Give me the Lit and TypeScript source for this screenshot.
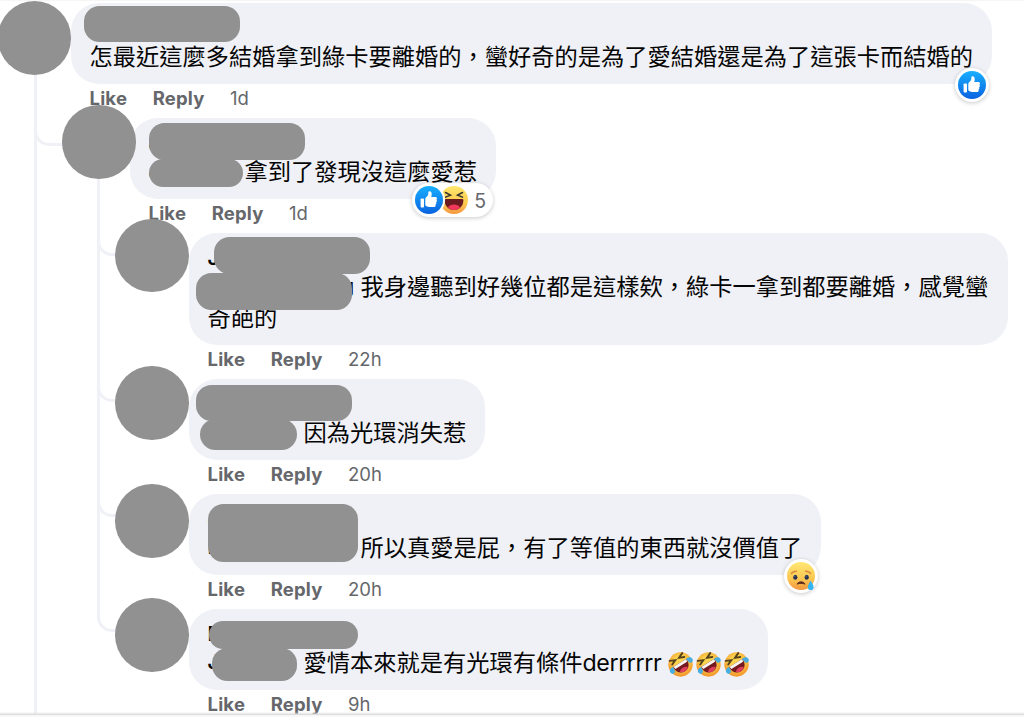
import { LitElement, html, css, nothing, TemplateResult } from 'lit';
import { customElement, property } from 'lit/decorators.js';
import { styleMap } from 'lit/directives/style-map.js';

type Reaction = 'like' | 'haha' | 'sad';

// x, y, width, height inside the bubble
type Mask = [number, number, number, number];

interface Comment {
  name: string;
  mention?: { text: string; width: number; end?: boolean };
  text: string;
  latin?: string;
  laughs?: number;
  time: string;
  avatar: [number, number];
  masks: Mask[];
  reactions?: Reaction[];
  count?: number;
  replies?: Comment[];
}

const thread: Comment = {
  name: '',
  text: '怎最近這麼多結婚拿到綠卡要離婚的，蠻好奇的是為了愛結婚還是為了這張卡而結婚的',
  time: '1d',
  avatar: [-2.4, -2],
  masks: [[13.3, 3, 156, 36]],
  reactions: ['like'],
  replies: [
    {
      name: 'J',
      mention: { text: 'J', width: 96 },
      text: '拿到了發現沒這麼愛惹',
      time: '1d',
      avatar: [3, -13.2],
      masks: [[19.4, 5.3, 156, 36.2], [19.4, 40.4, 94, 28]],
      reactions: ['like', 'haha'],
      count: 5,
      replies: [
        {
          name: 'J',
          mention: { text: 'g', width: 153, end: true },
          text: '我身邊聽到好幾位都是這樣欸，綠卡一拿到都要離婚，感覺蠻奇葩的',
          time: '22h',
          avatar: [-3, -14.5],
          masks: [[25, 4.2, 156, 36.5], [7, 40.3, 156, 36.5]],
        },
        {
          name: '',
          mention: { text: '', width: 96 },
          text: '因為光環消失惹',
          time: '20h',
          avatar: [-3, -13],
          masks: [[7, 6, 156, 36], [11, 40, 96.5, 31]],
        },
        {
          name: 'J',
          mention: { text: 'L', width: 153 },
          text: '所以真愛是屁，有了等值的東西就沒價值了',
          time: '20h',
          avatar: [-3, -9.8],
          masks: [[19.4, 9.9, 149.6, 58]],
          reactions: ['sad'],
        },
        {
          name: 'E',
          mention: { text: 'J', width: 96 },
          text: '愛情本來就是有光環有條件',
          latin: 'derrrrrr',
          laughs: 3,
          time: '9h',
          avatar: [-3, -11.2],
          masks: [[20, 11.4, 149.3, 28], [22.5, 38.5, 85.5, 33]],
        },
      ],
    },
  ],
};

const faces: Record<Reaction, TemplateResult> = {
  like: html`
    <svg viewBox="0 0 28 28">
      <defs>
        <linearGradient id="blue" x1="0" y1="0" x2="0" y2="1">
          <stop offset="0" stop-color="#18afff" />
          <stop offset="1" stop-color="#0a62df" />
        </linearGradient>
      </defs>
      <circle cx="14" cy="14" r="14" fill="url(#blue)" />
      <rect x="5.6" y="12.4" width="3.4" height="9" rx="0.9" fill="#fff" />
      <path
        d="M10.3 19.2v-6.1c0-.7.3-1.2.9-1.8l1.6-1.9c.4-.5.5-1.2.5-2.1 0-1.5.5-2 1.3-2 1.3 0 2.1 1.2 2.1 2.9 0 1-.2 1.8-.5 2.7h4c1.1 0 1.8.7 1.8 1.6 0 .6-.3 1-.7 1.3.4.3.6.7.6 1.2 0 .7-.4 1.2-.9 1.4.2.3.3.6.3 1 0 .7-.4 1.1-.9 1.3.1.2.2.5.2.7 0 1-.7 1.5-1.9 1.5h-4.4c-1.7 0-2.9-.4-4-1.7z"
        fill="#fff"
      />
    </svg>
  `,
  haha: html`
    <svg viewBox="0 0 28 28">
      <defs>
        <linearGradient id="yellow" x1="0" y1="0" x2="0" y2="1">
          <stop offset="0" stop-color="#ffe76c" />
          <stop offset="0.6" stop-color="#fccb50" />
          <stop offset="1" stop-color="#f69540" />
        </linearGradient>
      </defs>
      <circle cx="14" cy="14" r="14" fill="url(#yellow)" />
      <path d="M5.5 6.5l5 2.6-5 2M22.5 6.5l-5 2.6 5 2" fill="none" stroke="#33322e" stroke-width="1.5" stroke-linecap="round" />
      <path d="M4.6 14.2c0-1 .8-1.2 2-1.2h14.8c1.2 0 2 .2 2 1.2 0 5-3.4 9.8-9.4 9.8s-9.4-4.8-9.4-9.8z" fill="#6b1a20" />
      <path d="M8 21.2c1.3-1.7 3.4-2.6 6-2.6s4.7.9 6 2.6c-1.5 1.8-3.5 2.8-6 2.8s-4.5-1-6-2.8z" fill="#f2385a" />
    </svg>
  `,
  sad: html`
    <svg viewBox="0 0 28 28">
      <defs>
        <linearGradient id="pale" x1="0" y1="0" x2="0" y2="1">
          <stop offset="0" stop-color="#ffe874" />
          <stop offset="0.6" stop-color="#fcc751" />
          <stop offset="1" stop-color="#f3953f" />
        </linearGradient>
      </defs>
      <circle cx="14" cy="14" r="14" fill="url(#pale)" />
      <path d="M4.4 11.6c.9-1.5 2.6-2.4 5-2.4M23.6 11.6c-.9-1.5-2.6-2.4-5-2.4" fill="none" stroke="#d6873a" stroke-width="1.4" stroke-linecap="round" />
      <ellipse cx="8.3" cy="15.2" rx="2.1" ry="2.5" fill="#273150" />
      <ellipse cx="19.7" cy="15.2" rx="2.1" ry="2.5" fill="#273150" />
      <circle cx="7.8" cy="14.1" r="0.7" fill="#6f80ad" />
      <circle cx="19.2" cy="14.1" r="0.7" fill="#6f80ad" />
      <path d="M10 22.2c.8-1.6 2.2-2.4 4-2.4s3.2.8 4 2.4c-1.2-.6-2.5-.8-4-.8s-2.800.2-4 .8z" fill="#5c2b20" stroke="#5c2b20" stroke-width="0.8" />
      <path d="M23.6 18.6c1 2 3 4.6 3 6.6 0 1.7-1.2 2.9-2.9 2.9s-2.9-1.2-2.9-2.9c0-2 1.9-4.6 2.8-6.6z" fill="#35b5f1" />
    </svg>
  `,
};

const rofl = html`
  <svg class="rofl" viewBox="0 0 24 24">
    <defs>
      <radialGradient id="skin" cx="0.5" cy="0.4" r="0.6">
        <stop offset="0.4" stop-color="#fbd44e" />
        <stop offset="1" stop-color="#f2922a" />
      </radialGradient>
    </defs>
    <circle cx="12" cy="12" r="11.7" fill="url(#skin)" />
    <g transform="rotate(-32 12 12)">
      <path d="M4.8 10.2h14.8c.6 5.4-2.4 9.6-7.4 9.6s-8-4.2-7.4-9.6z" fill="#74191f" />
      <path d="M5.2 10.400h14c.1 1-.1 1.900-.4 2.600H5.600c-.3-.7-.5-1.600-.4-2.600z" fill="#f7f3f0" />
      <path d="M7.8 17.8c1-1.300 2.500-2 4.400-2s3.400.7 4.400 2c-1.100 1.300-2.600 2-4.400 2s-3.300-.7-4.400-2z" fill="#de3f5c" />
      <path d="M5 3.600l5 2.200-4.700 2M19.200 3.600l-5 2.200 4.700 2" fill="none" stroke="#55421a" stroke-width="1.800" stroke-linecap="round" />
      <path d="M4 10.600c-2.100-.2-3.700.8-3.800 2.500-.1 1.700 1.100 2.600 2.300 2.200 1.400-.5 1.700-2.600 1.500-4.700z" fill="#45aee2" stroke="#45aee2" />
      <path d="M20.200 10.600c2.100-.2 3.700.8 3.800 2.500.1 1.700-1.100 2.600-2.300 2.200-1.400-.5-1.700-2.600-1.500-4.700z" fill="#45aee2" stroke="#45aee2" />
    </g>
  </svg>
`;

@customElement('thread-comment')
export class ThreadComment extends LitElement {
  @property({ attribute: false }) comment!: Comment;
  @property({ type: Number }) depth = 0;
  @property({ type: Boolean, reflect: true }) last = false;

  static styles = css`
    :host {
      display: block;
      position: relative;
    }
    .row {
      display: flex;
      align-items: flex-start;
    }
    .side,
    .main {
      position: relative;
    }
    .side {
      flex: 0 0 71px;
      min-width: 0;
      z-index: 1;
    }
    .avatar {
      width: 73.5px;
      height: 73.5px;
      border-radius: 50%;
      background: #919191;
    }
    .bubble {
      position: relative;
      width: fit-content;
      max-width: 819px;
      box-sizing: border-box;
      padding: 6.5px 18.7px 12px 18.5px;
      border-radius: 28px;
      background: #f0f1f6;
      color: #050505;
      font-size: 23.26px;
      line-height: 31px;
    }
    .bubble.root {
      max-width: none;
    }
    .name {
      height: 31px;
      box-sizing: border-box;
      padding-top: 3px;
      font-weight: 600;
      font-size: 20px;
    }
    .mention {
      display: inline-block;
      height: 31px;
      vertical-align: top;
      font-weight: 600;
      font-size: 20px;
    }
    .mention.end {
      text-align: right;
    }
    .latin {
      letter-spacing: -0.42px;
    }
    .laughs {
      display: inline-flex;
      gap: 3px;
      height: 31px;
      box-sizing: border-box;
      padding-top: 5.7px;
      margin: 0 0.7px 0 6.5px;
      vertical-align: top;
    }
    .rofl {
      width: 25px;
      height: 25px;
    }
    .mask {
      position: absolute;
      border-radius: 15.5px;
      background: #919191;
    }

    /* Reactions */
    .reactions {
      position: absolute;
      right: 3px;
      bottom: -18px;
      display: flex;
      align-items: center;
      padding: 3px;
      border-radius: 18px;
      background: #fff;
      box-shadow: 0 1px 4px rgba(0, 0, 0, 0.22);
    }
    .face {
      width: 28px;
      height: 28px;
      border-radius: 50%;
      position: relative;
      z-index: 1;
    }
    .face + .face {
      margin-left: -3px;
      z-index: 0;
    }
    .face:first-child:not(:last-child) {
      box-shadow: 0 0 0 2px #fff;
    }
    .face svg {
      display: block;
      width: 100%;
      height: 100%;
    }
    .count {
      padding: 2px 3.5px 0 6px;
      color: #65676b;
      font-size: 19.5px;
      line-height: 26px;
    }

    /* Actions */
    .actions {
      display: flex;
      gap: 25.5px;
      height: 34.5px;
      box-sizing: border-box;
      padding: 2.6px 0 0 18.5px;
      color: #65676b;
      font-size: 18.5px;
      line-height: 24px;
    }
    .actions b {
      font-weight: 700;
      letter-spacing: 0.2px;
    }

    /* Thread lines */
    .replies {
      padding-left: 59px;
    }
    .rail,
    .elbow {
      position: absolute;
      z-index: -1;
      box-sizing: border-box;
      border: 0 solid #f0f1f6;
      border-left-width: 3px;
    }
    .rail {
      left: -21px;
      top: -60px;
      bottom: 0;
    }
    .elbow {
      left: -21px;
      top: -60px;
      width: 30px;
      height: 83px;
      border-bottom-width: 3px;
      border-bottom-left-radius: 15px;
    }
    .elbow.first {
      left: -25.5px;
      height: 88px;
      width: 40px;
    }
    .rail.root {
      left: 33.5px;
      top: 60px;
      bottom: 0;
    }
  `;

  render() {
    const c = this.comment;
    const root = this.depth === 0;
    return html`
      ${root
        ? html`<div class="rail root"></div>`
        : html`<div class="elbow ${this.depth === 1 ? 'first' : ''}"></div>`}
      ${this.depth === 2 && !this.last ? html`<div class="rail"></div>` : nothing}
      <div class="row">
        <div class="side">
          <div class="avatar" style=${styleMap({
            marginLeft: `${c.avatar[0]}px`,
            marginTop: `${c.avatar[1]}px`,
          })}></div>
        </div>
        <div class="main">
          <div class="bubble ${root ? 'root' : ''}">
            <div class="name">${c.name}</div>
            <div class="body">${this._renderMention()}${c.text}${this._renderTail()}</div>
            ${c.masks.map(([x, y, w, h]) => html`
              <div class="mask" style=${styleMap({
                left: `${x}px`,
                top: `${y}px`,
                width: `${w}px`,
                height: `${h}px`,
              })}></div>
            `)}
            ${this._renderReactions()}
          </div>
          <div class="actions"><b>Like</b><b>Reply</b><span>${c.time}</span></div>
        </div>
      </div>
      ${c.replies
        ? html`
            <div class="replies">
              ${c.replies.map((r, i) => html`
                <thread-comment
                  .comment=${r}
                  .depth=${this.depth + 1}
                  ?last=${i === c.replies!.length - 1}
                ></thread-comment>
              `)}
            </div>
          `
        : nothing}
    `;
  }

  private _renderMention() {
    const m = this.comment.mention;
    if (!m) return nothing;
    // the space after the name is part of the width
    const space = m.end ? 6.5 : 0;
    return html`<span
      class="mention ${m.end ? 'end' : ''}"
      style=${styleMap({ width: `${m.width - space}px`, marginRight: `${space}px` })}
    >${m.text}</span>`;
  }

  private _renderTail() {
    const { latin, laughs } = this.comment;
    if (!latin) return nothing;
    return html`<span class="latin">${latin}</span><span class="laughs">${Array.from({ length: laughs ?? 0 }, () => rofl)}</span>`;
  }

  private _renderReactions() {
    const { reactions, count } = this.comment;
    if (!reactions) return nothing;
    return html`
      <div class="reactions">
        ${reactions.map((r) => html`<span class="face">${faces[r]}</span>`)}
        ${count ? html`<span class="count">${count}</span>` : nothing}
      </div>
    `;
  }
}

@customElement('app-root')
export class AppRoot extends LitElement {
  static styles = css`
    :host {
      display: block;
      position: relative;
      isolation: isolate;
      height: 100vh;
      box-sizing: border-box;
      padding-top: 3.2px;
      overflow: hidden;
      background: #fff;
      box-shadow: inset 0 1px 1px #f5f5f5;
      font-family: Inter, 'Noto Sans CJK TC', sans-serif;
    }
    .edge {
      position: absolute;
      left: 0;
      right: 0;
      bottom: 0;
      height: 5px;
      background: linear-gradient(#fff0, #dedede 50%, #f6f6f6 70%, #fafafa);
    }
  `;

  render() {
    return html`
      <thread-comment .comment=${thread}></thread-comment>
      <div class="edge"></div>
    `;
  }
}

declare global {
  interface HTMLElementTagNameMap {
    'app-root': AppRoot;
    'thread-comment': ThreadComment;
  }
}
